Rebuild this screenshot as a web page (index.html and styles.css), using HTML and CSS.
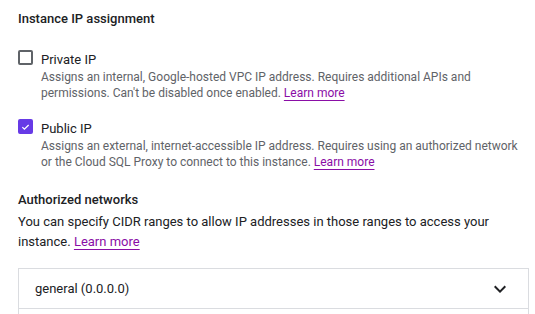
FILE: index.html
```html
<!DOCTYPE html>
<html lang="en">
<head>
<meta charset="UTF-8">
<meta name="viewport" content="width=device-width, initial-scale=1.0">
<title>Connections</title>
<link rel="stylesheet" href="styles.css">
</head>
<body>
<div class="panel">
    <h3 class="section-title">Instance IP assignment</h3>

    <div class="option">
        <span class="checkbox"></span>
        <div class="option-body">
            <div class="option-label">Private IP</div>
            <div class="option-desc">Assigns an internal, Google-hosted VPC IP address. Requires additional APIs and permissions. Can't be disabled once enabled. <a href="#">Learn more</a></div>
        </div>
    </div>

    <div class="option">
        <span class="checkbox checked">
            <svg width="14" height="14" viewBox="0 0 14 14"><path d="M3 7.2l2.6 2.6L11 4.4" fill="none" stroke="#fff" stroke-width="1.6"/></svg>
        </span>
        <div class="option-body">
            <div class="option-label">Public IP</div>
            <div class="option-desc">Assigns an external, internet-accessible IP address. Requires using an authorized network or the Cloud SQL Proxy to connect to this instance. <a href="#">Learn more</a></div>
        </div>
    </div>

    <h3 class="section-title networks">Authorized networks</h3>
    <p class="intro">You can specify CIDR ranges to allow IP addresses in those ranges to access your instance. <a href="#">Learn more</a></p>

    <div class="network-list">
        <div class="network-row">
            <span>general (0.0.0.0)</span>
            <svg width="24" height="24" viewBox="0 0 24 24"><path d="M7.4 8.6L12 13.2l4.6-4.6L18 10l-6 6-6-6z" fill="#202124"/></svg>
        </div>
        <div class="network-row"></div>
    </div>
</div>
</body>
</html>
```

FILE: styles.css
```css
body {
    margin: 0;
    font-family: Roboto, "Noto Sans", Arial, sans-serif;
    color: #202124;
    background: #fff;
}

.panel {
    padding: 10px 6px 0 18px;
}

.section-title {
    margin: 0;
    font-size: 13px;
    font-weight: 500;
    line-height: 18px;
}

.option {
    display: flex;
    gap: 8px;
    margin-top: 22px;
}

.option + .option {
    margin-top: 18px;
}

.checkbox {
    flex: none;
    width: 11px;
    height: 11px;
    border: 2px solid #5f6368;
    border-radius: 2px;
    display: flex;
    align-items: center;
    justify-content: center;
}

.checkbox.checked {
    background: #673ae6;
    border-color: #673ae6;
}

.option-label {
    font-size: 13px;
    line-height: 19px;
}

.option-desc {
    font-size: 12px;
    line-height: 16px;
    color: #5f6368;
}

a {
    color: #8a0ea6;
    text-decoration: underline;
    text-underline-offset: 3px;
}

.networks {
    margin-top: 21px;
}

.intro {
    margin: 3px 0 0;
    font-size: 13px;
    line-height: 20px;
}

.network-list {
    margin-top: 16px;
    border: 1px solid #dadce0;
    border-bottom: none;
}

.network-row {
    display: flex;
    align-items: center;
    justify-content: space-between;
    height: 39px;
    padding: 0 16px;
    font-size: 13px;
    border-bottom: 1px solid #dadce0;
}
```
